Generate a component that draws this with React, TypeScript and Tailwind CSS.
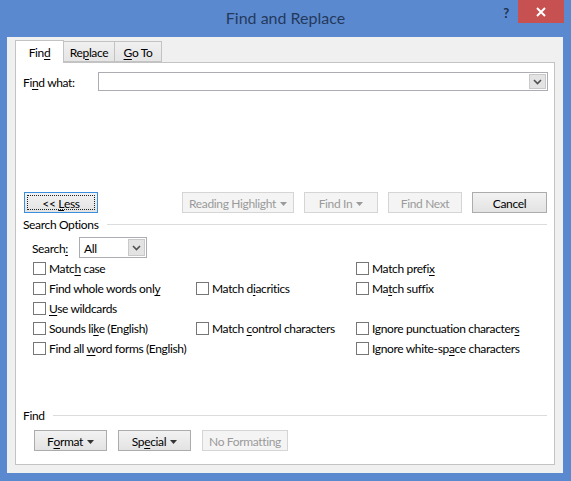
import React from 'react';

const U: React.FC<{ children: React.ReactNode }> = ({ children }) => (
  <span className="underline underline-offset-[2px] decoration-1">{children}</span>
);

const Caret: React.FC<{ color?: string }> = ({ color = '#333' }) => (
  <svg width="7" height="4" viewBox="0 0 7 4" className="ml-[4px] mt-[1px]">
    <path d="M0 0h7L3.5 4z" fill={color} />
  </svg>
);

const Chevron = () => (
  <svg width="9" height="6" viewBox="0 0 9 6">
    <path d="M1 1l3.5 3.5L8 1" stroke="#505050" strokeWidth="1.6" fill="none" />
  </svg>
);

interface BtnProps {
  w: string;
  disabled?: boolean;
  focused?: boolean;
  children: React.ReactNode;
}

const Btn: React.FC<BtnProps> = ({ w, disabled, focused, children }) => {
  const label = <span className="flex items-center whitespace-pre translate-y-[1px]">{children}</span>;
  if (disabled) {
    return (
      <div className={`${w} h-[21px] flex items-center justify-center border border-[#d5d5d5] bg-[#f4f4f4] text-[#9a9a9a]`}>
        {label}
      </div>
    );
  }
  if (focused) {
    return (
      <div className={`${w} h-[21px] p-[2px] border border-[#3c8fdc] bg-gradient-to-b from-[#f2f2f2] to-[#e3e3e3]`}>
        <div className="w-full h-full flex items-center justify-center border border-dotted border-[#222]">
          {label}
        </div>
      </div>
    );
  }
  return (
    <div className={`${w} h-[21px] flex items-center justify-center border border-[#acacac] bg-gradient-to-b from-[#f2f2f2] to-[#e3e3e3]`}>
      {label}
    </div>
  );
};

const Check: React.FC<{ children: React.ReactNode }> = ({ children }) => (
  <div className="h-[20px] flex items-center">
    <div className="w-[13px] h-[13px] border border-[#767676] bg-white shrink-0" />
    <span className="ml-[3px] whitespace-nowrap translate-y-[1px]">{children}</span>
  </div>
);

export default function App() {
  return (
    <div className="w-[571px] h-[481px] bg-[#5b89d0] flex flex-col font-['Lato',sans-serif] text-[12px] tracking-[-0.35px] text-black leading-none select-none">
      {/* Title bar */}
      <div className="h-[37px] grid grid-cols-[1fr_auto_1fr] items-start">
        <div />
        <div className="pt-[10px] text-[16px] tracking-normal text-[#24395c]">Find and Replace</div>
        <div className="flex justify-end items-start pr-[7px]">
          <span className="mt-[7px] mr-[9px] text-[13px] font-bold text-[#1d3150]">?</span>
          <div className="w-[46px] h-[23px] bg-[#c75050] flex items-center justify-center">
            <svg width="10" height="10" viewBox="0 0 10 10">
              <path d="M1 1l8 8M9 1l-8 8" stroke="#fff" strokeWidth="2" />
            </svg>
          </div>
        </div>
      </div>

      {/* Client area */}
      <div className="flex-1 ml-[7px] mr-[8px] mb-[8px] bg-[#f0f0f0] px-[8px] pt-[4px] pb-[8px] flex flex-col">
        {/* Tabs */}
        <div className="h-[22px] flex items-end -mb-px relative z-10">
          <div className="w-[49px] h-[23px] bg-white border border-b-0 border-[#c3c3c3] flex items-center justify-center">
            <span className="translate-y-[1px]">
              Fin<U>d</U>
            </span>
          </div>
          <div className="w-[51px] h-[21px] bg-gradient-to-b from-[#f0f0f0] to-[#e5e5e5] border border-l-0 border-[#c3c3c3] flex items-center justify-center mb-px">
            <span className="translate-y-[1px]">
              Re<U>p</U>lace
            </span>
          </div>
          <div className="w-[47px] h-[21px] bg-gradient-to-b from-[#f0f0f0] to-[#e5e5e5] border border-l-0 border-[#c3c3c3] flex items-center justify-center mb-px">
            <span className="translate-y-[1px]">
              <U>G</U>o To
            </span>
          </div>
        </div>

        {/* Panel */}
        <div className="flex-1 bg-white border border-[#c3c3c3] flex flex-col px-[7px] pt-[9px] pb-[13px]">
          {/* Find what */}
          <div className="flex items-center h-[19px]">
            <span className="w-[75px] translate-y-[1px]">
              Fi<U>n</U>d what:
            </span>
            <div className="flex-1 mr-[-1px] h-[19px] border border-[#abadb3] bg-white flex justify-end p-px">
              <div className="w-[17px] h-full bg-[#e3e3e3] border border-[#c9c9c9] flex items-center justify-center">
                <Chevron />
              </div>
            </div>
          </div>

          {/* Buttons */}
          <div className="mt-[101px] flex items-center">
            <div className="ml-[1px]">
              <Btn w="w-[74px]" focused>
                {'<< '}
                <U>L</U>ess
              </Btn>
            </div>
            <div className="flex-1" />
            <Btn w="w-[112px]" disabled>
              Reading Highlight
              <Caret color="#9a9a9a" />
            </Btn>
            <div className="ml-[10px]">
              <Btn w="w-[74px]" disabled>
                Find In
                <Caret color="#9a9a9a" />
              </Btn>
            </div>
            <div className="ml-[10px]">
              <Btn w="w-[74px]" disabled>
                Find Next
              </Btn>
            </div>
            <div className="ml-[10px]">
              <Btn w="w-[75px]">Cancel</Btn>
            </div>
          </div>

          {/* Search options heading */}
          <div className="mt-[3px] h-[16px] flex items-center">
            <span className="translate-y-[1px]">Search Options</span>
            <div className="flex-1 ml-[8px] h-px bg-[#dcdcdc]" />
          </div>

          <div className="mt-[5px] pl-[9px] flex items-center h-[21px]">
            <span className="w-[47px] translate-y-[1px]">
              Search<U>:</U>
            </span>
            <div className="w-[68px] h-[21px] border border-[#abadb3] bg-white flex items-center p-px">
              <span className="flex-1 pl-[3px] translate-y-[1px]">All</span>
              <div className="w-[17px] h-full bg-[#e3e3e3] border border-[#c9c9c9] flex items-center justify-center">
                <Chevron />
              </div>
            </div>
          </div>

          {/* Checkboxes */}
          <div className="pl-[10px] grid grid-cols-[163px_160px_1fr]">
            <Check>
              Matc<U>h</U> case
            </Check>
            <div />
            <Check>
              Match prefi<U>x</U>
            </Check>

            <Check>
              Find whole words onl<U>y</U>
            </Check>
            <Check>
              Match d<U>i</U>acritics
            </Check>
            <Check>
              Ma<U>t</U>ch suffix
            </Check>

            <Check>
              <U>U</U>se wildcards
            </Check>
            <div />
            <div />

            <Check>
              Sounds li<U>k</U>e (English)
            </Check>
            <Check>
              Match <U>c</U>ontrol characters
            </Check>
            <Check>
              Ignore punctuation character<U>s</U>
            </Check>

            <Check>
              Find all <U>w</U>ord forms (English)
            </Check>
            <div />
            <Check>
              Ignore white-sp<U>a</U>ce characters
            </Check>
          </div>

          <div className="flex-1" />

          {/* Find formatting */}
          <div className="h-[16px] flex items-center">
            <span className="translate-y-[1px]">Find</span>
            <div className="flex-1 ml-[8px] h-px bg-[#dcdcdc]" />
          </div>
          <div className="mt-[7px] pl-[11px] flex items-center gap-[11px]">
            <Btn w="w-[73px]">
              F<U>o</U>rmat
              <Caret />
            </Btn>
            <Btn w="w-[73px]">
              Sp<U>e</U>cial
              <Caret />
            </Btn>
            <Btn w="w-[86px]" disabled>
              No Formatting
            </Btn>
          </div>
        </div>
      </div>
    </div>
  );
}
